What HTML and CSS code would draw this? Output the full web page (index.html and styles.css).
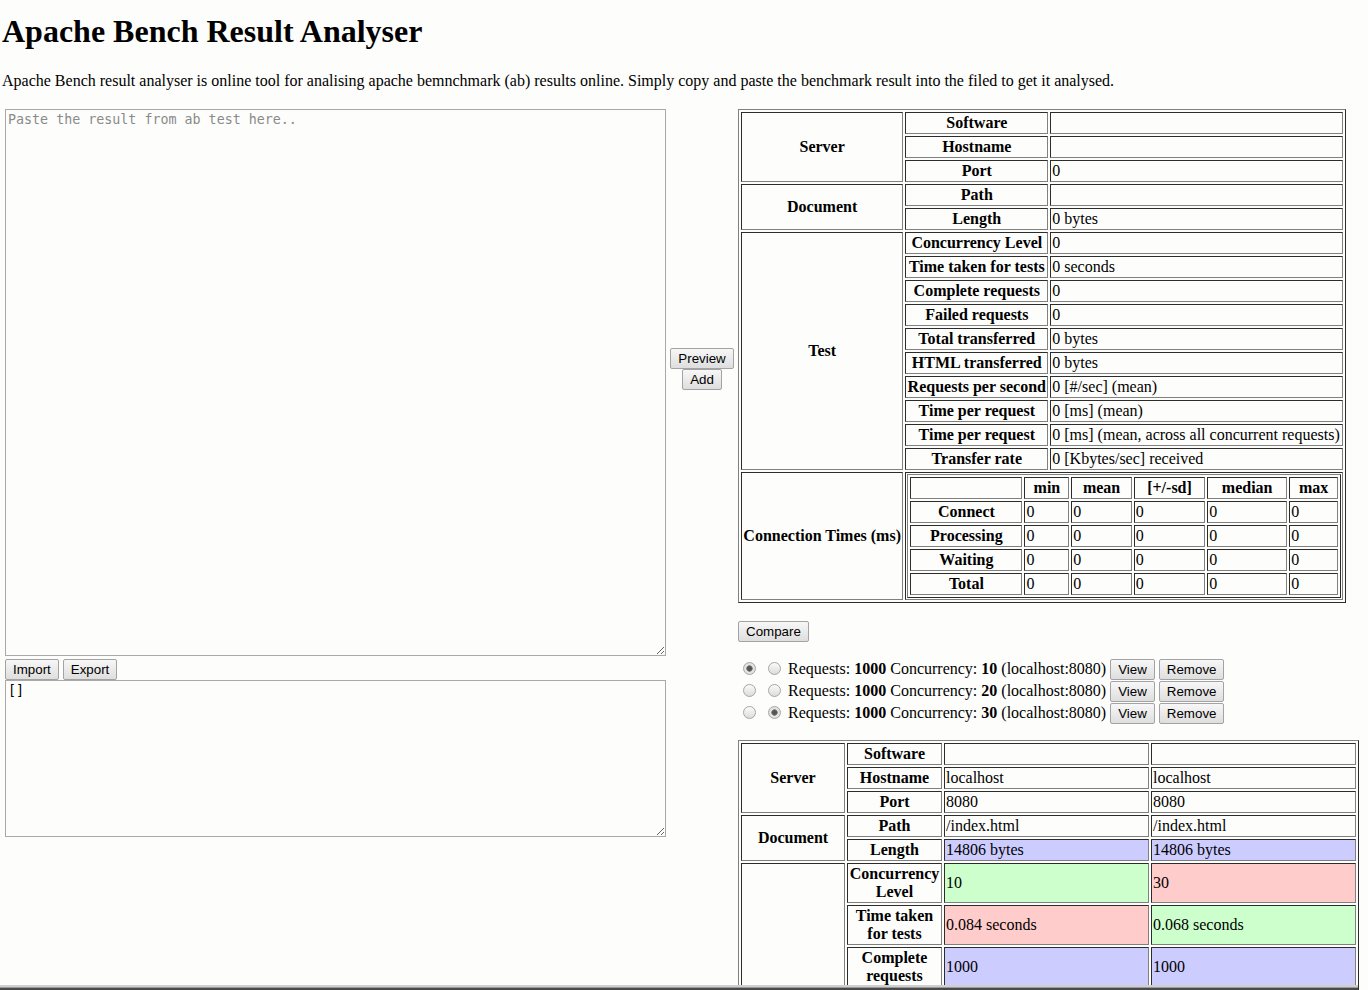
FILE: index.html
```html
<!DOCTYPE html>
<html lang="en">
<head>
    <meta charset="UTF-8">
    <title>Apache Bench Result Analyser</title>
    <link rel="stylesheet" href="styles.css">
</head>
<body>
    <h1>Apache Bench Result Analyser</h1>
    <p class="intro">Apache Bench result analyser is online tool for analising apache bemnchmark (ab) results online. Simply copy and paste the benchmark result into the filed to get it analysed.</p>

    <div class="workspace">
        <div class="input-col">
            <textarea class="result-input" placeholder="Paste the result from ab test here.."></textarea>
            <div class="io-buttons">
                <button class="btn">Import</button>
                <button class="btn">Export</button>
            </div>
            <textarea class="json-output">[]</textarea>
        </div>

        <div class="action-col">
            <button class="btn">Preview</button>
            <button class="btn">Add</button>
        </div>

        <div class="result-col">
            <table class="grid summary">
                <tr><th rowspan="3">Server</th><th>Software</th><td></td></tr>
                <tr><th>Hostname</th><td></td></tr>
                <tr><th>Port</th><td>0</td></tr>
                <tr><th rowspan="2">Document</th><th>Path</th><td></td></tr>
                <tr><th>Length</th><td>0 bytes</td></tr>
                <tr><th rowspan="10">Test</th><th>Concurrency Level</th><td>0</td></tr>
                <tr><th>Time taken for tests</th><td>0 seconds</td></tr>
                <tr><th>Complete requests</th><td>0</td></tr>
                <tr><th>Failed requests</th><td>0</td></tr>
                <tr><th>Total transferred</th><td>0 bytes</td></tr>
                <tr><th>HTML transferred</th><td>0 bytes</td></tr>
                <tr><th>Requests per second</th><td>0 [#/sec] (mean)</td></tr>
                <tr><th>Time per request</th><td>0 [ms] (mean)</td></tr>
                <tr><th>Time per request</th><td>0 [ms] (mean, across all concurrent requests)</td></tr>
                <tr><th>Transfer rate</th><td>0 [Kbytes/sec] received</td></tr>
                <tr>
                    <th>Connection Times (ms)</th>
                    <td colspan="2" class="nested">
                        <table class="grid times">
                            <tr><th></th><th>min</th><th>mean</th><th>[+/-sd]</th><th>median</th><th>max</th></tr>
                            <tr><th>Connect</th><td>0</td><td>0</td><td>0</td><td>0</td><td>0</td></tr>
                            <tr><th>Processing</th><td>0</td><td>0</td><td>0</td><td>0</td><td>0</td></tr>
                            <tr><th>Waiting</th><td>0</td><td>0</td><td>0</td><td>0</td><td>0</td></tr>
                            <tr><th>Total</th><td>0</td><td>0</td><td>0</td><td>0</td><td>0</td></tr>
                        </table>
                    </td>
                </tr>
            </table>

            <div class="compare-bar">
                <button class="btn">Compare</button>
            </div>

            <ul class="saved-list">
                <li class="saved-item"><input type="radio" name="left" checked> <input type="radio" name="right"> Requests: <b>1000</b> Concurrency: <b>10</b> (localhost:8080) <button class="btn">View</button> <button class="btn">Remove</button></li>
                <li class="saved-item"><input type="radio" name="left"> <input type="radio" name="right"> Requests: <b>1000</b> Concurrency: <b>20</b> (localhost:8080) <button class="btn">View</button> <button class="btn">Remove</button></li>
                <li class="saved-item"><input type="radio" name="left"> <input type="radio" name="right" checked> Requests: <b>1000</b> Concurrency: <b>30</b> (localhost:8080) <button class="btn">View</button> <button class="btn">Remove</button></li>
            </ul>

            <table class="grid compare">
                <colgroup>
                    <col class="col-group">
                    <col class="col-label">
                    <col class="col-value">
                    <col class="col-value">
                </colgroup>
                <tr><th rowspan="3">Server</th><th>Software</th><td></td><td></td></tr>
                <tr><th>Hostname</th><td>localhost</td><td>localhost</td></tr>
                <tr><th>Port</th><td>8080</td><td>8080</td></tr>
                <tr><th rowspan="2">Document</th><th>Path</th><td>/index.html</td><td>/index.html</td></tr>
                <tr><th>Length</th><td class="same">14806 bytes</td><td class="same">14806 bytes</td></tr>
                <tr><th rowspan="10">Test</th><th>Concurrency Level</th><td class="better">10</td><td class="worse">30</td></tr>
                <tr><th>Time taken for tests</th><td class="worse">0.084 seconds</td><td class="better">0.068 seconds</td></tr>
                <tr><th>Complete requests</th><td class="same">1000</td><td class="same">1000</td></tr>
                <tr><th>Failed requests</th><td class="same">0</td><td class="same">0</td></tr>
                <tr><th>Total transferred</th><td class="same">15052000 bytes</td><td class="same">15052000 bytes</td></tr>
                <tr><th>HTML transferred</th><td class="same">14806000 bytes</td><td class="same">14806000 bytes</td></tr>
                <tr><th>Requests per second</th><td class="worse">11904.76 [#/sec] (mean)</td><td class="better">14705.88 [#/sec] (mean)</td></tr>
                <tr><th>Time per request</th><td class="better">0.840 [ms] (mean)</td><td class="worse">2.040 [ms] (mean)</td></tr>
                <tr><th>Time per request</th><td class="worse">0.084 [ms]</td><td class="better">0.068 [ms]</td></tr>
                <tr><th>Transfer rate</th><td class="worse">174989.58 [Kbytes/sec]</td><td class="better">216170.96 [Kbytes/sec]</td></tr>
            </table>
        </div>
    </div>

    <div class="window-edge"></div>
</body>
</html>
```

FILE: styles.css
```css
body {
    margin: 0;
    padding-left: 2px;
    background-color: #fdfdfb;
    color: #000;
    font-family: "Liberation Serif", "Times New Roman", serif;
    font-size: 16px;
}

h1 {
    font-size: 32px;
    margin: 13px 0 21.5px;
}

.intro {
    margin: 0 0 19px;
}

.workspace {
    display: flex;
    align-items: flex-start;
    padding-left: 3px;
}

/* left side: paste area + saved json */
.input-col {
    width: 661px;
    flex: none;
}

textarea {
    display: block;
    box-sizing: border-box;
    width: 661px;
    margin: 0;
    padding: 2px;
    border: 1px solid #a9a9a9;
    background-color: #fdfdfb;
    color: #000;
    font-family: "DejaVu Sans Mono", "Liberation Mono", monospace;
    font-size: 13.33px;
}

textarea::placeholder {
    color: #8a8a8a;
}

.result-input {
    height: 547px;
}

.json-output {
    height: 157px;
}

.io-buttons {
    display: flex;
    gap: 4px;
    margin-top: 3px;
}

.action-col {
    width: 72px;
    flex: none;
    display: flex;
    flex-direction: column;
    align-items: center;
    padding-top: 239px;
}

.result-col {
    flex: none;
}

/* old school buttons */
.btn {
    font-family: "Liberation Sans", Arial, sans-serif;
    font-size: 13.33px;
    line-height: 15px;
    color: #000;
    margin: 0;
    padding: 2px 7px;
    border: 1px solid #a3a3a3;
    border-radius: 2px;
    background: linear-gradient(#f7f7f7, #dedede);
}

/* tables with border=1 look */
.grid {
    border: 1px outset gray;
    border-spacing: 2px;
}

.grid th,
.grid td {
    border: 1px inset gray;
    padding: 1px;
    line-height: 18px;
}

.grid th {
    text-align: center;
}

.grid td {
    text-align: left;
}

.summary {
    width: 608px;
}

.times {
    width: 100%;
}

.compare-bar {
    margin-top: 18px;
}

.saved-list {
    list-style: none;
    margin: 17px 0 0;
    padding: 0;
}

.saved-item {
    height: 22px;
    white-space: nowrap;
}

.saved-item input[type="radio"] {
    appearance: none;
    -webkit-appearance: none;
    box-sizing: border-box;
    width: 13px;
    height: 13px;
    margin: 3px 3px 0 5px;
    vertical-align: -1px;
    border: 1px solid #a6a6a6;
    border-radius: 50%;
    background: linear-gradient(#fbfbfb, #dcdcdc);
}

.saved-item input[type="radio"]:checked {
    background: radial-gradient(circle, #555 0, #555 2px, #8a8a8a 3px, #e6e6e6 3.5px, #d8d8d8 100%);
}

.compare {
    margin-top: 15px;
    width: 621px;
    table-layout: fixed;
}

.col-group {
    width: 104px;
}

.col-label {
    width: 95px;
}

.col-value {
    width: 205px;
}

.same {
    background-color: #ccccff;
}

.better {
    background-color: #ccffcc;
}

.worse {
    background-color: #ffcccc;
}

.window-edge {
    position: fixed;
    left: 0;
    bottom: 0;
    width: 1358px;
    height: 5px;
    background: linear-gradient(#cfcfcf 0, #cfcfcf 2px, #9a9a9a 2px, #9a9a9a 3px, #4a4a4a 3px);
}
```
